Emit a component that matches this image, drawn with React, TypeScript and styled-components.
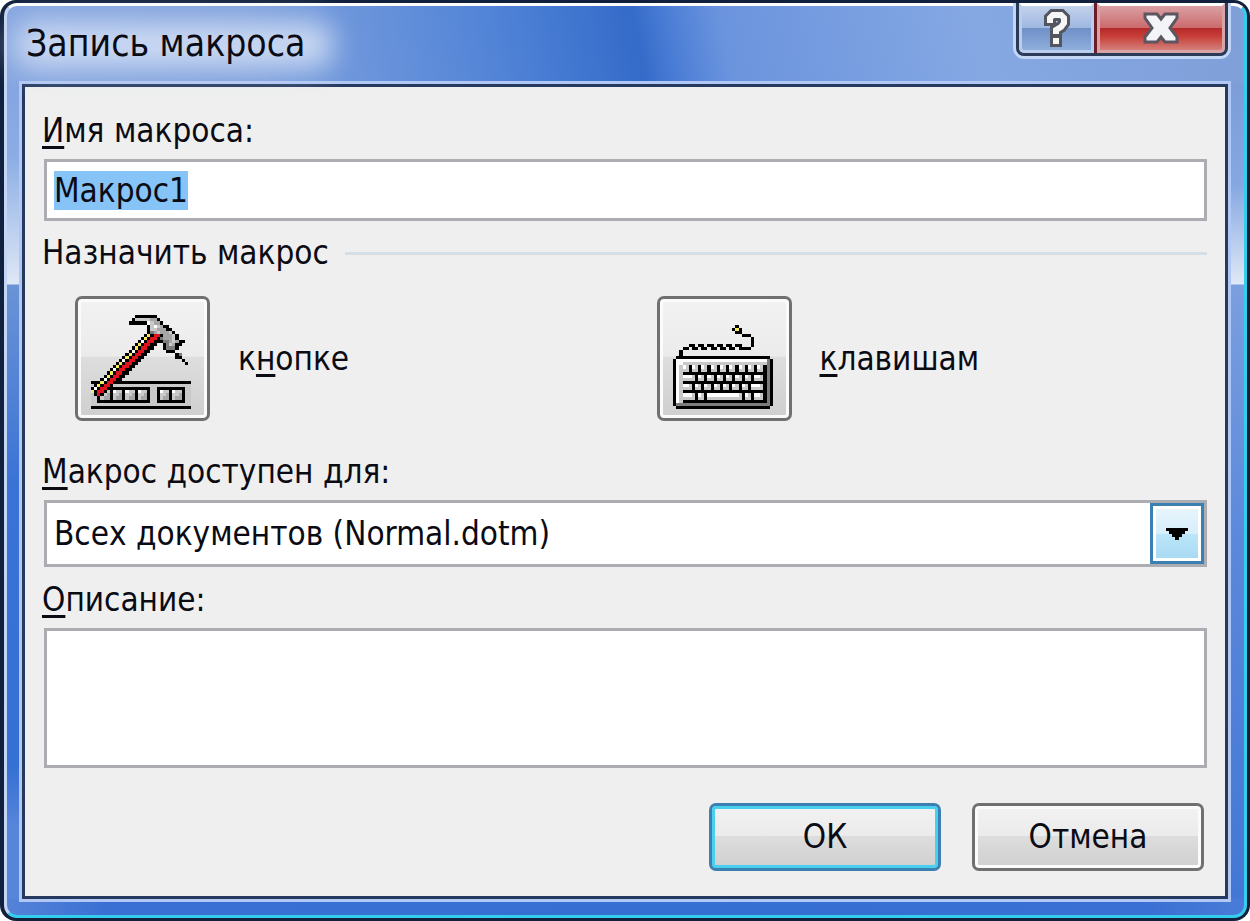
import React, { useEffect, useRef } from "react";
import styled, { createGlobalStyle } from "styled-components";

const Global = createGlobalStyle`
  *, *::before, *::after { box-sizing: border-box; }
  html, body { margin: 0; background: #fff; }
  button, input, select, textarea, label { font: inherit; color: inherit; }
`;

const Window = styled.div`
  min-height: 100vh;
  display: flex;
  padding: 3px 3px 3px 4px;
  border-radius: 16px;
  background: #11203c;
  color: #0b0b14;
  font-family: "DejaVu Sans Condensed", "DejaVu Sans", sans-serif;
  font-size: 33px;
  line-height: 40px;
`;

const Glass = styled.div`
  flex: 1;
  min-width: 0;
  display: flex;
  flex-direction: column;
  padding: 0 16px 16px 15px;
  border: 3px solid;
  border-color: #fff #35cdee #35cdee #c3d6f5;
  border-radius: 13px;
  background:
    linear-gradient(80deg, #86a6e0 0, #7fa1dd 20%, #6490da 32%, #4b7fd5 42%, #356bc9 51%, #4d7fd6 54%, #6b94de 58%, #85a8e3 78%, #7f9fd8 100%) 0 0 / 100% 78px no-repeat,
    linear-gradient(90deg, #5583d8, #3a70d3 8%, #356fd1 60%, #3a70d3 92%, #4a7bd8) 0 100% / 100% 16px no-repeat,
    linear-gradient(#84a5e0 78px, #8bade4 150px, #dfe8f6 278px, #6b93d6 279px, #3a73d5 480px, #3570d3 760px, #5785da 820px, #5785da 100%) 0 0 / 16px 100% no-repeat,
    linear-gradient(#7c9dd8 78px, #86a8e2 180px, #dfe8f6 278px, #7b9fdf 279px, #5a88da 540px, #4376d4 100%);
`;

const TitleBar = styled.header`
  display: flex;
  justify-content: space-between;
  align-items: flex-start;
  height: 78px;
`;

const Title = styled.h1`
  position: relative;
  z-index: 0;
  margin: 18px 0 0 4px;
  font-size: 37px;
  font-weight: 400;
  &::before {
    content: "";
    position: absolute;
    z-index: -1;
    inset: -2px -28px -4px -12px;
    border-radius: 20px;
    background: #cbd9f2;
    filter: blur(14px);
  }
`;

const CaptionButtons = styled.div`
  display: flex;
  margin-top: -3px;
  border: 3px solid #2b3a56;
  border-top: 0;
  border-radius: 0 0 8px 8px;
  box-shadow: 0 0 0 3px #c3d6f5;
  clip-path: inset(0 -3px -3px -3px);
`;

const CaptionButton = styled.button<{ $danger?: boolean }>`
  display: grid;
  place-items: center;
  width: ${(p) => (p.$danger ? 128 : 75)}px;
  height: 50px;
  padding: 0;
  border: 3px solid ${(p) => (p.$danger ? "#d9a3a6" : "#b9cdec")};
  border-radius: ${(p) => (p.$danger ? "0 0 5px 0" : "0 0 0 5px")};
  ${(p) => p.$danger && "box-shadow: -3px 0 0 #6d1d28; margin-left: 3px;"}
  border-top-color: #fff;
  background: ${(p) =>
    p.$danger
      ? "linear-gradient(#dba0a4, #cb6a6c 50%, #b52a2a 51%, #c9403a 70%, #d4807c)"
      : "linear-gradient(#c3d2ec, #9fb7e0 50%, #6f90c8 51%, #8faedc)"};
`;

const Client = styled.form`
  flex: 1;
  display: flex;
  flex-direction: column;
  padding: 24px 18px 25px 19px;
  border: 3px solid #26395f;
  box-shadow: 0 0 0 3px #b0c8f3;
  background: #efefef;
`;

const FieldLabel = styled.label`
  display: block;
  margin-left: -2px;
`;

const Key = styled.u`
  text-decoration-thickness: 3px;
  text-underline-offset: 4px;
  text-decoration-skip-ink: none;
`;

const NameInput = styled.input`
  width: 100%;
  height: 62px;
  margin: 8px 0 12px;
  padding: 0 7px;
  border: 3px solid #abadb3;
  border-radius: 0;
  background: #fff;
  outline: 0;
  caret-color: transparent;
  &::selection { background: #86c3f7; color: #0b0b14; }
`;

const Group = styled.fieldset`
  min-width: 0;
  margin: 0 0 31px;
  padding: 0;
  border: 0;
`;

const Legend = styled.legend`
  display: flex;
  align-items: center;
  gap: 16px;
  width: 100%;
  margin-left: -2px;
  padding: 0;
  &::after {
    content: "";
    flex: 1;
    height: 3px;
    background: #d5dfe5;
    margin-right: -2px;
  }
`;

const Targets = styled.div`
  display: grid;
  grid-template-columns: 1fr 1fr;
  padding: 23px 0 0 31px;
  margin-right: -31px;
`;

const Target = styled.div`
  display: flex;
  align-items: center;
  gap: 28px;
`;

const PushButton = styled.button<{ $default?: boolean }>`
  width: 232px;
  height: 68px;
  padding: 0;
  border: 3px solid ${(p) => (p.$default ? "#3c7fb1" : "#707070")};
  border-radius: 7px;
  box-shadow: inset 0 0 0 3px ${(p) => (p.$default ? "#48d0ee" : "#fbfbfb")};
  background: linear-gradient(#f2f2f2, #ebebeb 48%, #dddddd 49%, #cfcfcf);
`;

const IconButton = styled(PushButton)`
  display: grid;
  place-items: end start;
  width: 135px;
  height: 125px;
  padding: 0 0 9px 13px;
`;

const SelectBox = styled.div`
  position: relative;
  margin: 8px 0 13px;
`;

const Select = styled.select`
  appearance: none;
  display: block;
  width: 100%;
  height: 67px;
  padding: 0 60px 0 7px;
  border: 3px solid #abadb3;
  border-radius: 0;
  background: #fff;
`;

const DropMark = styled.span`
  position: absolute;
  inset: 3px 3px 3px auto;
  display: grid;
  place-items: center;
  width: 54px;
  border: 3px solid #3c7fb1;
  box-shadow: inset 0 0 0 3px #fff;
  background: linear-gradient(#e9f5fc, #d6eefb 50%, #bce5f8 51%, #a6d9f3);
  pointer-events: none;
`;

const Description = styled.textarea`
  flex: 1;
  width: 100%;
  min-height: 140px;
  margin: 8px 0 35px;
  padding: 6px 7px;
  border: 3px solid #abadb3;
  border-radius: 0;
  background: #fff;
  resize: none;
`;

const Actions = styled.div`
  display: flex;
  justify-content: flex-end;
  gap: 31px;
  padding-right: 3px;
`;

const palette: Record<string, string> = {
  K: "#000000",
  W: "#ffffff",
  L: "#c9c9c9",
  G: "#a6a6a6",
  D: "#7c7c7c",
  R: "#e0141c",
  Y: "#f6ee5a",
};

type Grid = string[][];

const blank = (rows: number): Grid => Array.from({ length: rows }, () => Array(32).fill("."));
const put = (g: Grid, row: number, col: number, run: string) => {
  [...run].forEach((ch, i) => {
    if (ch !== "." && g[row] && col + i < 32) g[row][col + i] = ch;
  });
};

function hammer(): Grid {
  const g = blank(30);
  put(g, 21, 0, "K".repeat(32));
  for (let r = 22; r < 29; r++) put(g, r, 0, "L".repeat(32));
  put(g, 29, 0, "K".repeat(32));
  put(g, 23, 2, "K".repeat(17));
  put(g, 27, 2, "K".repeat(17));
  put(g, 23, 21, "K".repeat(9));
  put(g, 27, 21, "K".repeat(9));
  ["WLLK", "LLGK", "LGGK"].forEach((cell, i) => {
    put(g, 24 + i, 2, "K" + cell.repeat(4));
    put(g, 24 + i, 21, "K" + cell.repeat(2));
  });
  const head: [number, number, string][] = [
    [0, 14, "KKKKKKK"],
    [1, 13, "KLLLLLGGK"],
    [2, 12, "KKKKKKWLGGK"],
    [3, 18, "KLWLGKK"],
    [4, 18, "KLLGGGKK"],
    [5, 18, "KDGLGGGLK"],
    [6, 19, "KDGLGGGLK"],
    [7, 20, "KDDGGGLK"],
    [8, 21, "KKDDGLGKK"],
    [9, 23, "KDLGKK"],
    [10, 23, "KDDDK"],
    [11, 24, "KKK"],
    [12, 27, "KD"],
    [13, 27, "KK"],
    [14, 29, "K"],
    [15, 30, "K"],
  ];
  head.forEach(([r, c, s]) => put(g, r, c, s));
  for (let r = 6; r < 25; r++) {
    const run = "K" + (r % 3 === 2 ? "W" : "Y") + "KRRK" + (r > 8 && r < 21 ? "K" : "");
    const start = 23 - r;
    put(g, r, Math.max(start, 0), start < 0 ? run.slice(-start) : run);
  }
  put(g, 25, 1, "KRK");
  return g;
}

function keyboard(): Grid {
  const g = blank(27);
  put(g, 0, 20, "K");
  put(g, 1, 19, "KYK");
  put(g, 2, 20, "KK");
  put(g, 3, 22, "KKK");
  put(g, 4, 25, "K");
  put(g, 5, 25, "K");
  put(g, 6, 5, "KK.KK.KK.KK.KK.KK...KK");
  g[6][26] = ".";
  put(g, 7, 3, "KK.KK.KK.KK.KK.KK.KKKK");
  put(g, 8, 2, "K");
  put(g, 9, 2, "K");
  put(g, 10, 1, "K".repeat(30));
  for (let r = 11; r < 26; r++) put(g, r, 0, "KWL" + "K".repeat(27) + "DK");
  put(g, 11, 1, "W".repeat(29));
  put(g, 12, 1, "WW" + "L".repeat(27));
  const keys = [
    "WLK".repeat(9),
    "WWWLK" + "WLK".repeat(6) + "WWLK",
    "WWLK" + "WLK".repeat(6) + "WWWLK",
    "WWWLKWLK" + "WWWWWWWWWWLK" + "WLKWWLK",
  ];
  keys.forEach((k, i) => {
    put(g, 13 + i * 3, 3, k);
    put(g, 14 + i * 3, 3, k.replace(/W/g, "L"));
  });
  put(g, 25, 1, "D".repeat(30));
  put(g, 26, 1, "K".repeat(30));
  return g;
}

const PixelArt = ({ grid }: { grid: Grid }) => (
  <svg
    width={100}
    height={Math.round(grid.length * 3.125)}
    viewBox={`0 0 32 ${grid.length}`}
    shapeRendering="crispEdges"
    aria-hidden="true"
  >
    {grid.flatMap((row, y) =>
      row.map((ch, x) =>
        ch === "." ? null : <rect key={`${x}-${y}`} x={x} y={y} width={1} height={1} fill={palette[ch]} />
      )
    )}
  </svg>
);

const HelpGlyph = () => (
  <svg width="26" height="38" viewBox="0 0 26 38" fill="none" aria-hidden="true">
    <path d="M6 17V9l3-3h8l3 3v5l-3 4-5 3v7M12 24v14" stroke="#53565f" strokeWidth="12" />
    <path d="M6 14V9l3-3h8l3 3v5l-3 4-5 3v4M12 29v6" stroke="#f6f6f6" strokeWidth="6" />
  </svg>
);

const CloseGlyph = () => (
  <svg width="36" height="32" viewBox="0 0 36 32" aria-hidden="true">
    <path
      d="M2 2h12l4 5 4-5h12v4l-7 10 7 9v5H22l-4-5-4 5H2v-5l7-9-7-10z"
      fill="#f2f4f7"
      stroke="#5d5560"
      strokeWidth="3"
    />
  </svg>
);

export default function App() {
  const nameRef = useRef<HTMLInputElement>(null);
  useEffect(() => {
    nameRef.current?.focus();
    nameRef.current?.select();
  }, []);

  return (
    <>
      <Global />
      <Window>
        <Glass>
          <TitleBar>
            <Title>Запись макроса</Title>
            <CaptionButtons>
              <CaptionButton type="button" aria-label="Справка">
                <HelpGlyph />
              </CaptionButton>
              <CaptionButton type="button" $danger aria-label="Закрыть">
                <CloseGlyph />
              </CaptionButton>
            </CaptionButtons>
          </TitleBar>
          <Client onSubmit={(e) => e.preventDefault()}>
            <FieldLabel htmlFor="name">
              <Key>И</Key>мя макроса:
            </FieldLabel>
            <NameInput id="name" ref={nameRef} defaultValue="Макрос1" />
            <Group>
              <Legend>Назначить макрос</Legend>
              <Targets>
                <Target>
                  <IconButton type="button" id="to-button">
                    <PixelArt grid={hammer()} />
                  </IconButton>
                  <label htmlFor="to-button">
                    к<Key>н</Key>опке
                  </label>
                </Target>
                <Target>
                  <IconButton type="button" id="to-keys">
                    <PixelArt grid={keyboard()} />
                  </IconButton>
                  <label htmlFor="to-keys">
                    <Key>к</Key>лавишам
                  </label>
                </Target>
              </Targets>
            </Group>
            <FieldLabel htmlFor="scope">
              <Key>М</Key>акрос доступен для:
            </FieldLabel>
            <SelectBox>
              <Select id="scope">
                <option>Всех документов (Normal.dotm)</option>
              </Select>
              <DropMark>
                <svg width="22" height="12" viewBox="0 0 22 12" aria-hidden="true">
                  <path d="M0 0h22v3h-3v3h-3v3h-3v3H9V9H6V6H3V3H0z" fill="#000" />
                </svg>
              </DropMark>
            </SelectBox>
            <FieldLabel htmlFor="description">
              <Key>О</Key>писание:
            </FieldLabel>
            <Description id="description" />
            <Actions>
              <PushButton type="submit" $default>
                ОК
              </PushButton>
              <PushButton type="button">Отмена</PushButton>
            </Actions>
          </Client>
        </Glass>
      </Window>
    </>
  );
}
